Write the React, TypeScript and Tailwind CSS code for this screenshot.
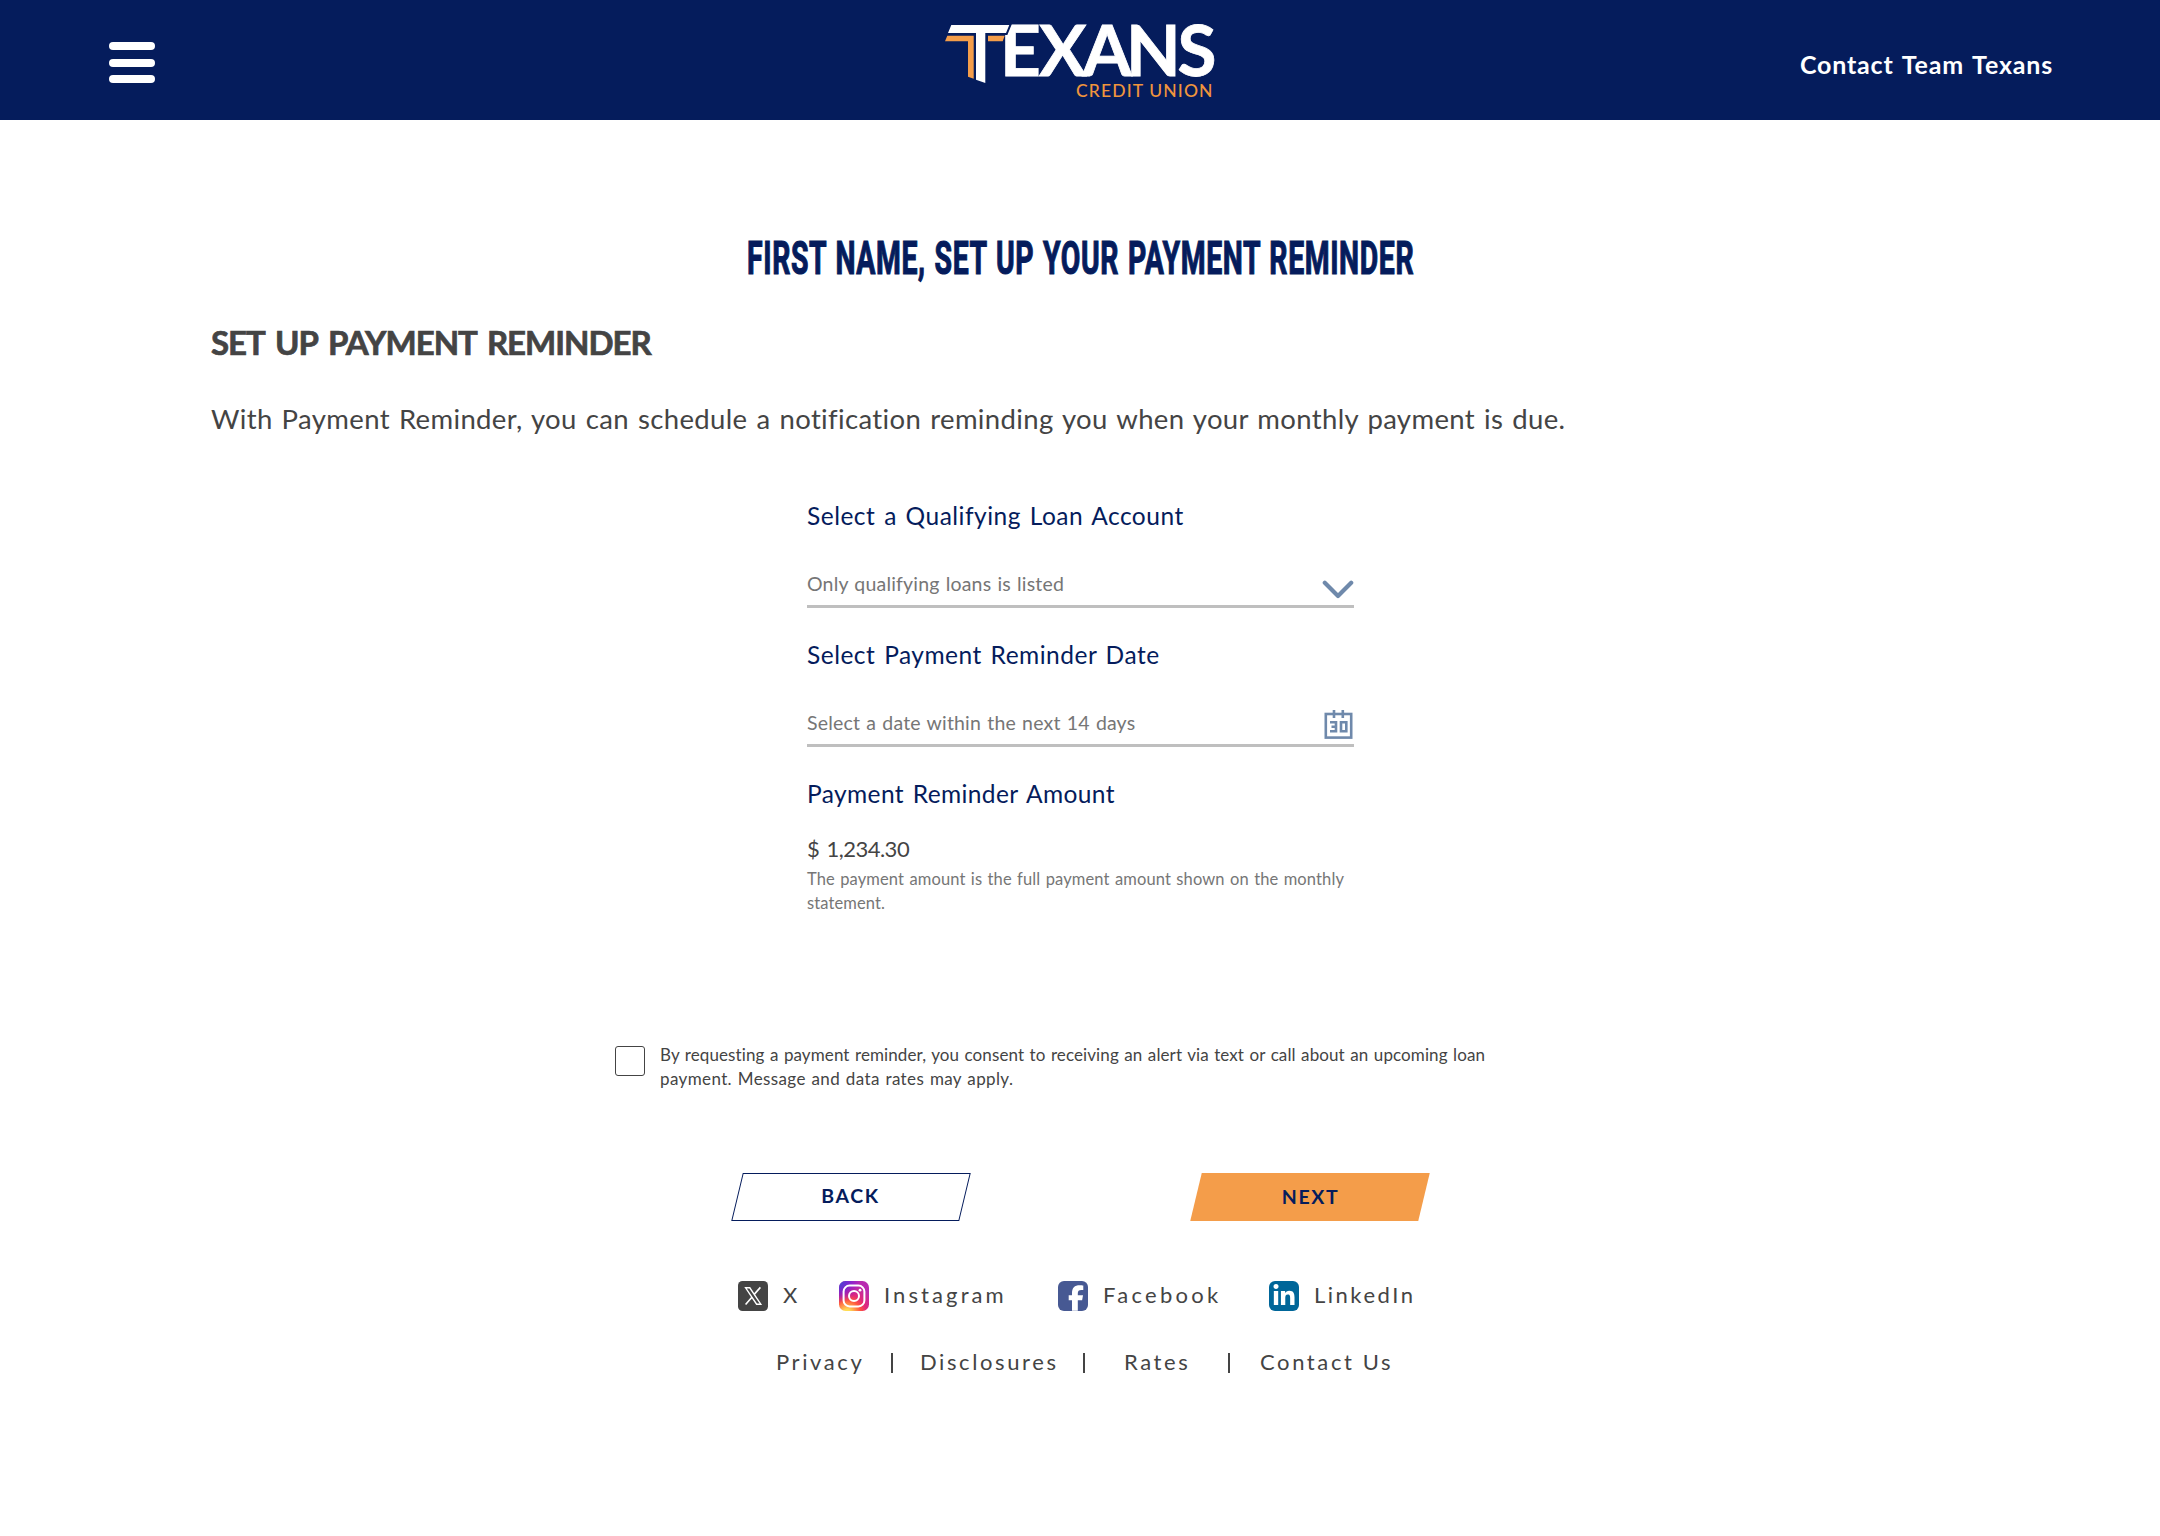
import type { ReactNode } from 'react';
import { FaFacebookF, FaLinkedinIn } from 'react-icons/fa6';

function Logo() {
  return (
    <svg width="276" height="112" viewBox="0 0 276 112" role="img" aria-label="Texans Credit Union">
      <text
        x="59 98 141.5 185 236.5"
        y="76.3"
        fill="#fff"
        stroke="#fff"
        strokeWidth="0.8"
        className="font-['Lato'] text-[71px] font-bold"
      >
        EXANS
      </text>
      {/* the mark: white crossbar and stem over an orange shadow */}
      <path
        d="M10.3 25H68.3L65 33H44.3V83L35 79.7V33H7Z"
        fill="#fff"
        stroke="#051c5c"
        strokeWidth="4"
        paintOrder="stroke"
      />
      <g fill="#f49d4a">
        <path d="M6.3 35.7H32.7V78.7L27 76.7V41.3H4Z" />
        <path d="M47 35.7H63.7L61.7 41.3H47Z" />
      </g>
      <text x="135" y="97" textLength="136.5" fill="#f0953c" className="font-['Lato'] text-[17.5px] font-medium">
        CREDIT UNION
      </text>
    </svg>
  );
}

function Header() {
  return (
    <header className="flex h-[119.5px] items-start bg-[#051c5c] pr-[107px] pl-[109px] text-white">
      <button type="button" aria-label="Menu" className="mt-[42px] flex w-[46px] flex-col gap-[8.5px]">
        <span className="h-2 w-full rounded-full bg-white" />
        <span className="h-2 w-full rounded-full bg-white" />
        <span className="h-2 w-full rounded-full bg-white" />
      </button>
      <div className="ml-[786px]">
        <Logo />
      </div>
      <a
        href="#contact"
        className="mt-[48px] ml-auto text-[25px] leading-8 font-bold tracking-[0.82px] whitespace-nowrap [word-spacing:2px]"
      >
        Contact Team Texans
      </a>
    </header>
  );
}

function ChevronIcon() {
  return (
    <svg width="32" height="20" viewBox="0 0 32 20" fill="none" stroke="#6f89ab" strokeWidth="4.2" className="mt-2">
      <path d="M2.8 2.8 16 16 29.2 2.8" strokeLinecap="round" strokeLinejoin="round" />
    </svg>
  );
}

function CalendarIcon() {
  return (
    <svg
      width="32"
      height="30"
      viewBox="0 0 32 30"
      fill="none"
      stroke="#6f89ab"
      strokeWidth="2.6"
      className="-mt-px -mr-px"
    >
      <rect x="2.8" y="4" width="25.4" height="23.6" />
      <path d="M11 0V8M19.8 0V8" />
      <path d="M7 12.2H13V21.3H7M8.5 16.8H13M18 12.2H23.3V21.3H18Z" strokeWidth="2.6" />
    </svg>
  );
}

function Field({ label, placeholder, icon }: { label: string; placeholder: string; icon: ReactNode }) {
  return (
    <div className="flex flex-col">
      <span className="text-[24.5px] leading-8 tracking-[0.5px] text-[#051c5c] [word-spacing:2px]">{label}</span>
      <div className="mt-10 flex h-9 items-start justify-between border-b-3 border-[#bfbfbf] text-[19.5px] leading-6 tracking-[0.18px] text-[#767676] [word-spacing:1px]">
        <span>{placeholder}</span>
        {icon}
      </div>
    </div>
  );
}

function XIcon() {
  return (
    <svg width="30" height="30" viewBox="0 0 30 30">
      <rect width="30" height="30" rx="4.5" fill="#444" />
      <g fill="none" stroke="#fff">
        <path d="M7.6 6.8H11.8L22.8 23.2H18.6Z" strokeWidth="1.4" />
        <path d="M22.4 6.4 16.2 13.4M13.9 16.2 7.6 23.6" strokeWidth="1.6" />
      </g>
    </svg>
  );
}

function InstagramIcon() {
  return (
    <svg width="30" height="30" viewBox="0 0 30 30">
      <defs>
        <radialGradient id="ig-warm" cx="0.27" cy="1.08" r="1">
          <stop offset="0" stopColor="#fd5" />
          <stop offset="0.12" stopColor="#fd5" />
          <stop offset="0.45" stopColor="#ff543e" />
          <stop offset="0.65" stopColor="#e0287a" />
          <stop offset="1" stopColor="#b82bb0" />
        </radialGradient>
        <radialGradient id="ig-cool" cx="-0.05" cy="0" r="0.75">
          <stop offset="0" stopColor="#3771e8" />
          <stop offset="0.25" stopColor="#5a3ad0" />
          <stop offset="1" stopColor="#60f" stopOpacity="0" />
        </radialGradient>
      </defs>
      <rect width="30" height="30" rx="6.5" fill="url(#ig-warm)" />
      <rect width="30" height="30" rx="6.5" fill="url(#ig-cool)" />
      <g fill="none" stroke="#fff" strokeWidth="2">
        <rect x="4.6" y="4.6" width="20.8" height="20.8" rx="6" />
        <circle cx="15" cy="15" r="5" />
      </g>
      <circle cx="21" cy="9.2" r="1.4" fill="#fff" />
    </svg>
  );
}

function Separator() {
  return <span className="mt-[5.5px] h-5 w-0.5 bg-[#444]" />;
}

export default function App() {
  return (
    <div className="min-h-[1536px] w-[2160px] bg-white font-['Lato',sans-serif] text-[#444]">
      <Header />

      <main className="flex flex-col">
        <h1 className="mt-[110.5px] text-center font-['Roboto',sans-serif] text-[46px] leading-[56px] font-bold text-[#051c5c]">
          <span className="ml-[2px] inline-block scale-x-[0.617] tracking-[1px] whitespace-nowrap [-webkit-text-stroke:1.2px_#051c5c] [word-spacing:2px]">
            FIRST NAME, SET UP YOUR PAYMENT REMINDER
          </span>
        </h1>

        <section className="mt-9 px-[211px]">
          <h2 className="text-[33px] leading-10 font-bold tracking-[-1px] [-webkit-text-stroke:0.7px_#444] [word-spacing:4px]">
            SET UP PAYMENT REMINDER
          </h2>
          <p className="mt-[41px] text-[27.5px] leading-8 tracking-[0.36px] [word-spacing:1.6px]">
            With Payment Reminder, you can schedule a notification reminding you when your monthly payment is due.
          </p>
        </section>

        <form className="mt-[65px] ml-[807px] flex w-[547px] flex-col">
          <Field
            label="Select a Qualifying Loan Account"
            placeholder="Only qualifying loans is listed"
            icon={<ChevronIcon />}
          />
          <div className="mt-[31px]">
            <Field
              label="Select Payment Reminder Date"
              placeholder="Select a date within the next 14 days"
              icon={<CalendarIcon />}
            />
          </div>

          <span className="mt-[31px] text-[24.5px] leading-8 tracking-[0.4px] text-[#051c5c] [word-spacing:2px]">
            Payment Reminder Amount
          </span>
          <span className="mt-[25px] text-[22px] leading-7 tracking-[-0.5px] [word-spacing:2px]">$ 1,234.30</span>
          <p className="mt-[3.5px] text-[16.5px] leading-6 tracking-[0.12px] text-[#767676] [word-spacing:1px]">
            The payment amount is the full payment amount shown on the monthly
            <br />
            statement.
          </p>
        </form>

        <label className="mt-[128px] ml-[615px] flex items-start">
          <span className="mt-[3px] size-[30px] rounded-[3px] border-[1.5px] border-[#444]" />
          <span className="ml-[15px] flex flex-col text-[17px] leading-6 [word-spacing:1px]">
            <span className="tracking-[0.1px]">
              By requesting a payment reminder, you consent to receiving an alert via text or call about an upcoming loan
            </span>
            <span className="tracking-[0.38px]">payment. Message and data rates may apply.</span>
          </span>
        </label>

        <div className="mt-[82.5px] ml-[730.5px] flex h-12 w-[699px] justify-between text-[19.5px] leading-6 font-bold tracking-[1.6px] text-[#051c5c]">
          <button type="button" className="relative h-12 w-[240px] pb-[3px]">
            <span className="absolute inset-x-[6px] inset-y-0 -skew-x-[13.5deg] border-[1.5px] border-[#051c5c]" />
            <span className="relative">BACK</span>
          </button>
          <button type="button" className="relative h-12 w-[240px]">
            <span className="absolute inset-x-[6px] inset-y-0 -skew-x-[13.5deg] bg-[#f49d4a]" />
            <span className="relative ml-0.5">NEXT</span>
          </button>
        </div>
      </main>

      <footer className="mt-[60px] text-[22px] leading-7">
        <nav className="flex pl-[738px]">
          <a href="#x" className="flex w-[101px] gap-[15px]">
            <XIcon />
            <span>X</span>
          </a>
          <a href="#instagram" className="flex w-[219px] gap-[15px] tracking-[3.1px]">
            <InstagramIcon />
            <span>Instagram</span>
          </a>
          <a href="#facebook" className="flex w-[211px] gap-[15px] tracking-[3.3px]">
            <span className="flex size-[30px] items-end justify-end rounded-[6px] bg-[#475993]">
              <FaFacebookF className="mr-1 h-[26px] w-4 text-white" />
            </span>
            <span>Facebook</span>
          </a>
          <a href="#linkedin" className="flex gap-[15px] tracking-[2.5px]">
            <span className="flex size-[30px] items-center justify-center rounded-[6px] bg-[#069]">
              <FaLinkedinIn className="size-6 text-white" />
            </span>
            <span>LinkedIn</span>
          </a>
        </nav>
        <nav className="mt-[36.5px] flex pl-[776px] tracking-[2.6px]">
          <a href="#privacy" className="w-[115px]">
            Privacy
          </a>
          <Separator />
          <a href="#disclosures" className="ml-[27px] w-[163px]">
            Disclosures
          </a>
          <Separator />
          <a href="#rates" className="ml-[39px] w-[104px]">
            Rates
          </a>
          <Separator />
          <a href="#contact-us" className="ml-[30px]">
            Contact Us
          </a>
        </nav>
      </footer>
    </div>
  );
}
